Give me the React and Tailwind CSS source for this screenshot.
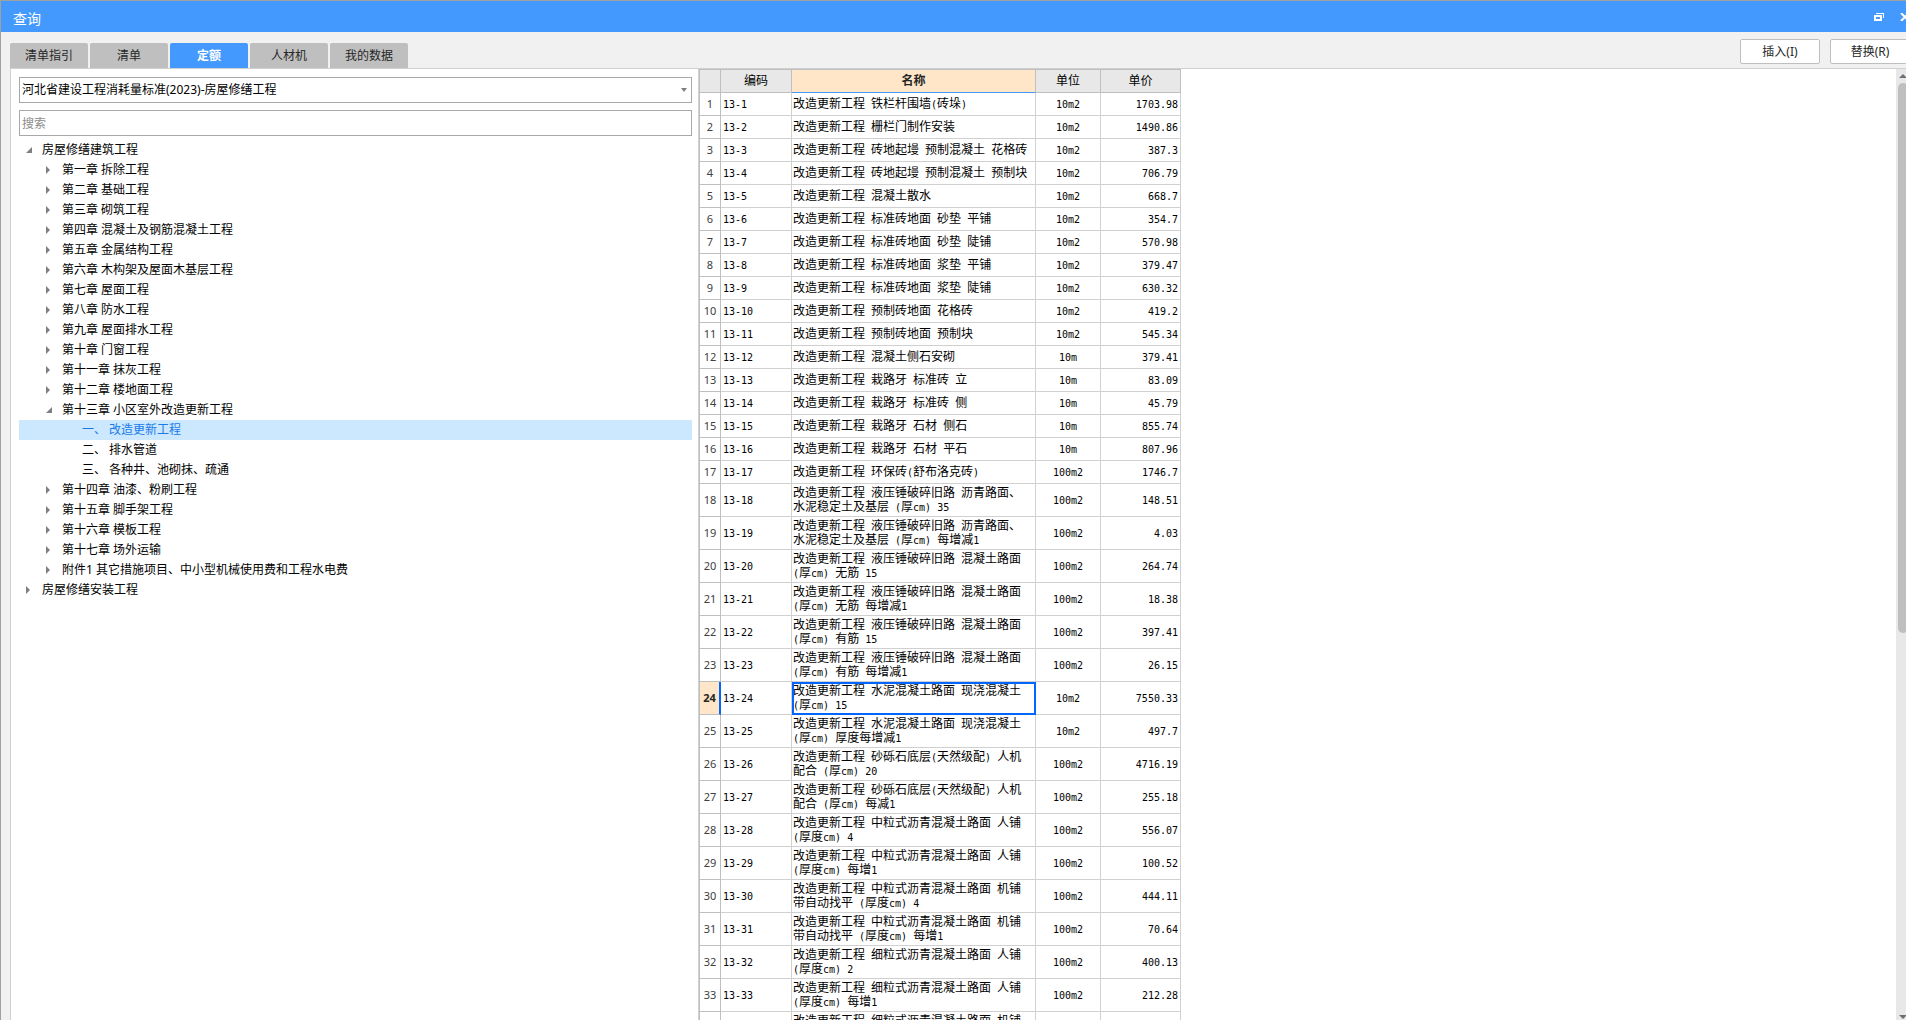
import React from 'react';

const TABS = ['清单指引', '清单', '定额', '人材机', '我的数据'];

const CHAPTERS = [
  { level: 0, state: 'open', text: '房屋修缮建筑工程' },
  { level: 1, state: 'closed', text: '第一章 拆除工程' },
  { level: 1, state: 'closed', text: '第二章 基础工程' },
  { level: 1, state: 'closed', text: '第三章 砌筑工程' },
  { level: 1, state: 'closed', text: '第四章 混凝土及钢筋混凝土工程' },
  { level: 1, state: 'closed', text: '第五章 金属结构工程' },
  { level: 1, state: 'closed', text: '第六章 木构架及屋面木基层工程' },
  { level: 1, state: 'closed', text: '第七章 屋面工程' },
  { level: 1, state: 'closed', text: '第八章 防水工程' },
  { level: 1, state: 'closed', text: '第九章 屋面排水工程' },
  { level: 1, state: 'closed', text: '第十章 门窗工程' },
  { level: 1, state: 'closed', text: '第十一章 抹灰工程' },
  { level: 1, state: 'closed', text: '第十二章 楼地面工程' },
  { level: 1, state: 'open', text: '第十三章 小区室外改造更新工程' },
  { level: 2, state: 'leaf', text: '一、 改造更新工程', selected: true },
  { level: 2, state: 'leaf', text: '二、 排水管道' },
  { level: 2, state: 'leaf', text: '三、 各种井、池砌抹、疏通' },
  { level: 1, state: 'closed', text: '第十四章 油漆、粉刷工程' },
  { level: 1, state: 'closed', text: '第十五章 脚手架工程' },
  { level: 1, state: 'closed', text: '第十六章 模板工程' },
  { level: 1, state: 'closed', text: '第十七章 场外运输' },
  { level: 1, state: 'closed', text: '附件1 其它措施项目、中小型机械使用费和工程水电费' },
  { level: 0, state: 'closed', text: '房屋修缮安装工程' },
];

const ROWS = [
  ['铁栏杆围墙(砖垛)', '10m2', '1703.98'],
  ['栅栏门制作安装', '10m2', '1490.86'],
  ['砖地起墁 预制混凝土 花格砖', '10m2', '387.3'],
  ['砖地起墁 预制混凝土 预制块', '10m2', '706.79'],
  ['混凝土散水', '10m2', '668.7'],
  ['标准砖地面 砂垫 平铺', '10m2', '354.7'],
  ['标准砖地面 砂垫 陡铺', '10m2', '570.98'],
  ['标准砖地面 浆垫 平铺', '10m2', '379.47'],
  ['标准砖地面 浆垫 陡铺', '10m2', '630.32'],
  ['预制砖地面 花格砖', '10m2', '419.2'],
  ['预制砖地面 预制块', '10m2', '545.34'],
  ['混凝土侧石安砌', '10m', '379.41'],
  ['栽路牙 标准砖 立', '10m', '83.09'],
  ['栽路牙 标准砖 侧', '10m', '45.79'],
  ['栽路牙 石材 侧石', '10m', '855.74'],
  ['栽路牙 石材 平石', '10m', '807.96'],
  ['环保砖(舒布洛克砖)', '100m2', '1746.7'],
  ['液压锤破碎旧路 沥青路面、水泥稳定土及基层 (厚cm) 35', '100m2', '148.51'],
  ['液压锤破碎旧路 沥青路面、水泥稳定土及基层 (厚cm) 每增减1', '100m2', '4.03'],
  ['液压锤破碎旧路 混凝土路面 (厚cm) 无筋 15', '100m2', '264.74'],
  ['液压锤破碎旧路 混凝土路面 (厚cm) 无筋 每增减1', '100m2', '18.38'],
  ['液压锤破碎旧路 混凝土路面 (厚cm) 有筋 15', '100m2', '397.41'],
  ['液压锤破碎旧路 混凝土路面 (厚cm) 有筋 每增减1', '100m2', '26.15'],
  ['水泥混凝土路面 现浇混凝土 (厚cm) 15', '10m2', '7550.33'],
  ['水泥混凝土路面 现浇混凝土 (厚cm) 厚度每增减1', '10m2', '497.7'],
  ['砂砾石底层(天然级配) 人机配合 (厚cm) 20', '100m2', '4716.19'],
  ['砂砾石底层(天然级配) 人机配合 (厚cm) 每减1', '100m2', '255.18'],
  ['中粒式沥青混凝土路面 人铺 (厚度cm) 4', '100m2', '556.07'],
  ['中粒式沥青混凝土路面 人铺 (厚度cm) 每增1', '100m2', '100.52'],
  ['中粒式沥青混凝土路面 机铺带自动找平 (厚度cm) 4', '100m2', '444.11'],
  ['中粒式沥青混凝土路面 机铺带自动找平 (厚度cm) 每增1', '100m2', '70.64'],
  ['细粒式沥青混凝土路面 人铺 (厚度cm) 2', '100m2', '400.13'],
  ['细粒式沥青混凝土路面 人铺 (厚度cm) 每增1', '100m2', '212.28'],
  ['细粒式沥青混凝土路面 机铺带自动找平 (厚度cm) 2', '', ''],
].map(([name, unit, price], i) => ({
  no: i + 1,
  code: `13-${i + 1}`,
  name: `改造更新工程 ${name}`,
  unit,
  price,
  tall: i >= 17,
  current: i === 23,
}));

const INDENT = ['pl-[7px]', 'pl-[27px]', 'pl-[47px]'];

// Half-width characters take exactly half of a 12px ideograph.
function Mixed({ text }) {
  return text.split(/([\x20-\x7e]+)/).map((part, i) =>
    i % 2 ? (
      <span key={i} className="font-['DejaVu_Sans_Mono',monospace] text-[10px] leading-none">
        {part}
      </span>
    ) : (
      part
    ),
  );
}

function Twisty({ state }) {
  return (
    <svg viewBox="0 0 8 8" className="size-2 shrink-0" fill="#7f7f7f" aria-hidden="true">
      {state === 'open' && <path d="M6 1v6H0z" />}
      {state === 'closed' && <path d="M0 0l4 4-4 4z" />}
    </svg>
  );
}

function TitleBar() {
  return (
    <header className="flex h-8 shrink-0 items-center justify-between border-t border-[#a0a0a0] bg-[#4499ff] pt-1 pl-3 text-white">
      <h1 className="text-sm">查询</h1>
      <div className="flex items-center gap-4 pb-1">
        <button aria-label="还原" className="flex">
          <svg viewBox="0 0 10 8" className="h-2 w-[10px]" fill="#fff" shapeRendering="crispEdges">
            <path d="M2 0h8v5H9V1H2z" />
            <path fillRule="evenodd" d="M0 2h8v6H0zM2 4v2h4V4z" />
          </svg>
        </button>
        <button aria-label="关闭" className="flex">
          <svg viewBox="0 0 10 8" className="h-2 w-[10px]" stroke="#fff" strokeWidth="2">
            <path d="M1 0l8 8M9 0L1 8" />
          </svg>
        </button>
      </div>
    </header>
  );
}

function TabStrip() {
  return (
    <div className="flex h-9 shrink-0 items-end justify-between pl-[9px]">
      <div role="tablist" className="flex gap-[2px]">
        {TABS.map((tab) => (
          <button
            key={tab}
            role="tab"
            aria-selected={tab === '定额'}
            className={`h-[25px] w-[78px] rounded-t-[2px] text-xs ${
              tab === '定额' ? 'bg-[#4499ff] font-bold text-white' : 'bg-[#bfbfbf] text-[#262626]'
            }`}
          >
            {tab}
          </button>
        ))}
      </div>
      <div className="flex h-full items-start gap-[10px] pt-[7px]">
        {['插入(I)', '替换(R)'].map((label) => (
          <button
            key={label}
            className="h-[25px] w-20 rounded-[2px] border border-[#bfbfbf] bg-white text-xs text-[#262626]"
          >
            {label}
          </button>
        ))}
      </div>
    </div>
  );
}

function Sidebar() {
  return (
    <aside className="flex w-[687px] shrink-0 flex-col pt-2 pr-[6px] pl-2">
      <div className="relative">
        <select
          aria-label="标准"
          className="block h-[26px] w-full appearance-none border border-[#a8a8a8] bg-white pl-[2px] text-xs text-black"
        >
          <option>河北省建设工程消耗量标准(2023)-房屋修缮工程</option>
        </select>
        <svg
          viewBox="0 0 6 4"
          className="pointer-events-none absolute top-[11px] right-[5px] h-1 w-[6px]"
          fill="#7f7f7f"
          aria-hidden="true"
        >
          <path d="M0 0h6L3 4z" />
        </svg>
      </div>
      <input
        type="text"
        aria-label="搜索"
        placeholder="搜索"
        className="mt-[7px] block h-[26px] w-full border border-[#a8a8a8] bg-white pl-[2px] text-xs placeholder:text-[#8c8c8c]"
      />
      <ul role="tree" className="mt-1 text-xs">
        {CHAPTERS.map((node) => (
          <li
            key={node.text}
            role="treeitem"
            aria-level={node.level + 1}
            aria-selected={!!node.selected}
            className={`flex h-5 items-center gap-2 whitespace-pre ${INDENT[node.level]} ${
              node.selected ? 'bg-[#cce8ff] text-[#1a7ae8]' : 'text-black'
            }`}
          >
            <Twisty state={node.state} />
            {node.text}
          </li>
        ))}
      </ul>
    </aside>
  );
}

function QuotaTable() {
  const head = 'border-r border-b border-[#bfbfbf] bg-[#e8e8e8] font-normal';
  const cell = 'border-r border-b border-[#d0d0d0]';
  return (
    <table className="w-[482px] table-fixed border-separate border-spacing-0 border-t border-l border-[#bfbfbf] text-xs leading-[14px] text-black">
      <colgroup>
        <col className="w-[21px]" />
        <col className="w-[71px]" />
        <col className="w-[244px]" />
        <col className="w-[65px]" />
        <col className="w-[80px]" />
      </colgroup>
      <thead>
        <tr className="h-[23px]">
          <th aria-label="序号" className={head} />
          <th className={head}>编码</th>
          <th className="border-r border-b border-r-[#bfbfbf] border-b-[#4499ff] bg-[#ffe6c8] font-bold text-[#262626]">
            名称
          </th>
          <th className={head}>单位</th>
          <th className={head}>单价</th>
        </tr>
      </thead>
      <tbody>
        {ROWS.map((row) => (
          <tr key={row.no} className={row.tall ? 'h-[33px]' : 'h-[23px]'}>
            <th
              scope="row"
              className={`text-[11px] ${
                row.current
                  ? 'border-r-2 border-b border-r-[#0066ff] border-b-[#bfbfbf] bg-[#ffe6c8] font-bold text-[#262626]'
                  : 'border-r border-b border-[#bfbfbf] font-normal text-[#404040]'
              }`}
            >
              {row.no}
            </th>
            <td className={`${cell} pl-[2px]`}>
              <Mixed text={row.code} />
            </td>
            <td
              className={`${cell} pr-1 pl-px ${
                row.current ? 'outline-2 -outline-offset-2 outline-[#0066ff]' : ''
              }`}
            >
              <Mixed text={row.name} />
            </td>
            <td className={`${cell} text-center`}>
              <Mixed text={row.unit} />
            </td>
            <td className={`${cell} pr-[2px] text-right`}>
              <Mixed text={row.price} />
            </td>
          </tr>
        ))}
      </tbody>
    </table>
  );
}

function ScrollBar() {
  return (
    <div className="flex w-[14px] shrink-0 flex-col items-center justify-between bg-[#e8e8e8]" aria-hidden="true">
      <svg viewBox="0 0 8 4" className="mt-[5px] h-1 w-2 shrink-0" fill="#6e6e78">
        <path d="M4 0l4 4H0z" />
      </svg>
      <div className="mt-[5px] flex w-full flex-1 px-[2px]">
        <div className="h-[59%] w-full rounded-full bg-[#bfbfbf]" />
      </div>
      <svg viewBox="0 0 8 4" className="mb-px h-1 w-2 shrink-0" fill="#6e6e78">
        <path d="M0 0h8L4 4z" />
      </svg>
    </div>
  );
}

export default function App() {
  return (
    <div className="h-screen overflow-hidden bg-[#f1f1f1] font-['Noto_Sans','Noto_Sans_CJK_SC',sans-serif]">
      <div className="-mr-1 flex h-full flex-col border-l border-[#a0a0a0]">
        <TitleBar />
        <TabStrip />
        <main className="ml-[9px] flex min-h-0 flex-1 border-t border-l border-[#d0d0d0] bg-white">
          <Sidebar />
          <div className="min-w-0 flex-1 overflow-hidden border-l border-[#d0d0d0]">
            <QuotaTable />
          </div>
          <ScrollBar />
        </main>
      </div>
    </div>
  );
}
